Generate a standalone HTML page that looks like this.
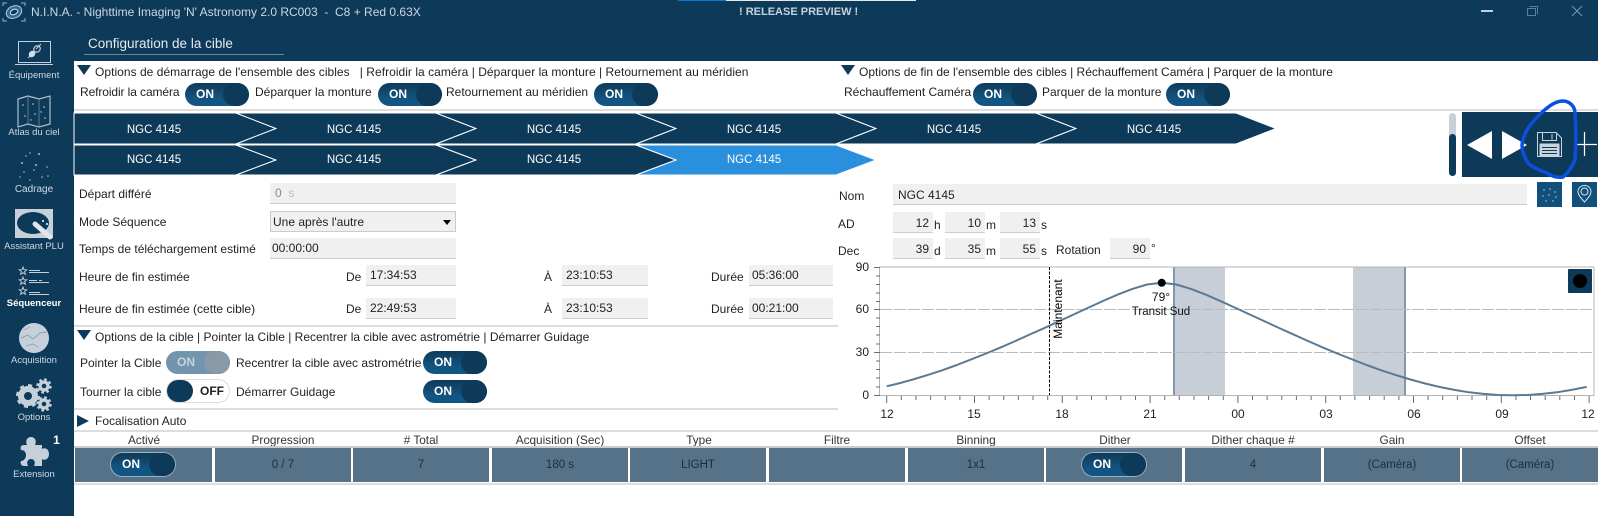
<!DOCTYPE html>
<html><head><meta charset="utf-8"><style>
html,body{margin:0;padding:0;background:#fff}
#p{position:relative;width:1598px;height:516px;overflow:hidden;background:#fff;font-family:"Liberation Sans",sans-serif;font-size:12px;color:#222}
.t{position:absolute;line-height:16px;white-space:nowrap}
.b{position:absolute;background:#f0f0f0;border-bottom:1px solid #ccc}
.h{position:absolute;height:2px;background:#ddd}
.s{position:absolute;color:#cfd8e0;font-size:9.5px;line-height:12px;text-align:center;left:0;width:66px;white-space:nowrap}
.tg{position:absolute;width:64px;height:23px;border-radius:12px;background:linear-gradient(#0e3a59,#135582 70%);color:#fff;font-weight:bold;font-size:12px;line-height:22px}
.tg i{position:absolute;right:0;top:0;width:26px;height:23px;border-radius:12px;background:#0e3a59}
.tg span{position:absolute;left:11px}
.c{position:absolute;top:448px;height:34px;width:136px;background:#557289;color:#1f2d38;text-align:center;line-height:35px;font-size:11.5px}
.th{position:absolute;top:432px;width:138px;text-align:center;line-height:16px;font-size:11.8px;color:#333}
.n{position:absolute;color:#fff;text-align:center;width:100px;line-height:16px;font-size:11.5px}
svg{position:absolute;left:0;top:0}
</style></head><body><div id="p">

<div style="position:absolute;left:0;top:0;width:1598px;height:61px;background:#0e3a59"></div>
<div style="position:absolute;left:0;top:0;width:74px;height:516px;background:#0e3a59"></div>
<div style="position:absolute;left:678px;top:0;width:48px;height:1px;background:#0a78d7"></div>
<div style="position:absolute;left:726px;top:0;width:190px;height:1px;background:#e8e8e8"></div>

<div class="t" style="left:31px;top:4px;font-size:12px;color:#ccd6df">N.I.N.A. - Nighttime Imaging 'N' Astronomy 2.0 RC003 &nbsp;- &nbsp;C8 + Red 0.63X</div>
<div class="t" style="left:739px;top:4px;font-weight:bold;font-size:11px;color:#c5d2dd">! RELEASE PREVIEW !</div>
<div class="t" style="left:88px;top:36px;font-size:13.5px;color:#e4eaef">Configuration de la cible</div>
<div style="position:absolute;left:84px;top:54px;width:200px;height:1px;background:#6c8597"></div>

<!-- sidebar labels -->
<div class="s" style="left:1px;top:70px">Équipement</div>
<div class="s" style="left:1px;top:127px">Atlas du ciel</div>
<div class="s" style="left:1px;top:184px;font-size:10px">Cadrage</div>
<div class="s" style="left:1px;top:241px">Assistant PLU</div>
<div class="s" style="left:1px;top:298px;color:#fff;font-weight:bold">Séquenceur</div>
<div class="s" style="left:1px;top:355px">Acquisition</div>
<div class="s" style="left:1px;top:412px">Options</div>
<div class="s" style="left:1px;top:469px">Extension</div>
<div style="position:absolute;left:49px;top:433px;width:15px;height:15px;color:#fff;font-weight:bold;font-size:12px;text-align:center;line-height:15px">1</div>

<!-- top options -->
<div class="t" style="left:95px;top:64px;letter-spacing:.035px">Options de démarrage de l'ensemble des cibles &nbsp; | Refroidir la caméra | Déparquer la monture | Retournement au méridien</div>
<div class="t" style="left:859px;top:64px">Options de fin de l'ensemble des cibles | Réchauffement Caméra | Parquer de la monture</div>
<div class="t" style="left:80px;top:84px;letter-spacing:-.1px">Refroidir la caméra</div>
<div class="t" style="left:255px;top:84px">Déparquer la monture</div>
<div class="t" style="left:446px;top:84px">Retournement au méridien</div>
<div class="t" style="left:844px;top:84px">Réchauffement Caméra</div>
<div class="t" style="left:1042px;top:84px">Parquer de la monture</div>
<div class="tg" style="left:185px;top:83px"><span>ON</span><i></i></div>
<div class="tg" style="left:378px;top:83px"><span>ON</span><i></i></div>
<div class="tg" style="left:594px;top:83px"><span>ON</span><i></i></div>
<div class="tg" style="left:973px;top:83px"><span>ON</span><i></i></div>
<div class="tg" style="left:1166px;top:83px"><span>ON</span><i></i></div>
<div class="h" style="left:74px;top:109px;width:1524px"></div>

<!-- main SVG -->
<svg width="1598" height="516" viewBox="0 0 1598 516" xmlns="http://www.w3.org/2000/svg">
<!-- window controls -->
<rect x="1481" y="10" width="12" height="2" fill="#c5d0da"/>
<path d="M1527.500 8.500H1535.500V15.500H1527.500Z" fill="none" stroke="#5d7f99" stroke-width="1"/>
<path d="M1529.500 6.500H1537.500V14" fill="none" stroke="#5d7f99" stroke-width="1"/>
<path d="M1572 6L1582 16M1582 6L1572 16" fill="none" stroke="#7d98ad" stroke-width="1"/>
<!-- logo -->
<g fill="none" stroke="#9fb3c3" stroke-width="1"><path d="M3 6V3H7M21 3H25V6M3 18V21H7M21 21H25V18"/></g>
<ellipse cx="14" cy="12" rx="8" ry="6" fill="#2f6b96" stroke="#b8c9d6" transform="rotate(-25 14 12)"/>
<ellipse cx="14" cy="12" rx="4" ry="2.5" fill="#0e3a59" stroke="#d6e0e8" transform="rotate(-25 14 12)"/>
<!-- laptop -->
<g fill="none" stroke="#c5d0da"><rect x="18.500" y="41.500" width="32" height="21"/><path d="M15 64.500H53"/>
<path d="M28 58l4-4M36 49l5-5" stroke-width="1"/><ellipse cx="32" cy="54" rx="3.500" ry="3" transform="rotate(-45 32 54)" fill="#d5dde4" stroke="none"/><ellipse cx="37" cy="49" rx="3.500" ry="3" transform="rotate(-45 37 49)" fill="none" stroke-width="1.200"/></g>
<!-- atlas -->
<path d="M18 99L28 96L39 99L50 96V124L39 127L28 124L18 127Z" fill="none" stroke="#aebdca" stroke-width="1.200"/>
<path d="M28 96V124M39 99V127" stroke="#7e97aa" stroke-width=".7"/>
<g fill="#c5d0da"><circle cx="23" cy="105" r=".8"/><circle cx="33" cy="104" r=".8"/><circle cx="44" cy="107" r=".8"/><circle cx="25" cy="116" r=".8"/><circle cx="35" cy="114" r=".8"/><circle cx="45" cy="118" r=".8"/><circle cx="31" cy="120" r=".7"/><circle cx="41" cy="112" r=".7"/></g>
<!-- cadrage -->
<g fill="#aebdca"><circle cx="30" cy="153" r=".8"/><circle cx="39" cy="154" r="1"/><circle cx="22" cy="163" r="1"/><circle cx="36" cy="165" r="1"/><circle cx="47" cy="167" r=".8"/><circle cx="24" cy="172" r=".8"/><circle cx="42" cy="177" r=".8"/><circle cx="30" cy="180" r=".8"/><circle cx="48" cy="176" r=".8"/><circle cx="34" cy="170" r=".8"/><circle cx="26" cy="156" r=".7"/><circle cx="20" cy="177" r=".7"/></g>
<!-- PLU -->
<rect x="15" y="209" width="38" height="29" fill="#c5d0da"/>
<ellipse cx="33" cy="223" rx="16" ry="11" fill="#0e3a59"/>
<path d="M35 224L50 237" stroke="#dfe6ec" stroke-width="5" stroke-linecap="round"/>
<g fill="#fff"><circle cx="43" cy="221" r="1"/><circle cx="47" cy="224" r="1"/></g>
<!-- sequencer -->
<g fill="none" stroke="#c5d0da" stroke-width=".9">
<path d="M23 267l1 2.700 2.800.1-2.200 1.700.8 2.800-2.400-1.600-2.400 1.600.8-2.800-2.200-1.700 2.800-.1z"/>
<path d="M23 277l1 2.700 2.800.1-2.200 1.700.8 2.800-2.400-1.600-2.400 1.600.8-2.800-2.200-1.700 2.800-.1z"/>
<path d="M23 287l1 2.700 2.800.1-2.200 1.700.8 2.800-2.400-1.600-2.400 1.600.8-2.800-2.200-1.700 2.800-.1z"/>
<path d="M29 270.500H40M29 272.500H49M29 280.500H37M39 280.500H42M29 282.500H49M29 292.500H40M29 294.500H49"/></g>
<!-- acquisition -->
<circle cx="34" cy="338" r="15" fill="#c5d0da"/>
<path d="M21 338L28 335L33 339L40 333L47 332" fill="none" stroke="#7f95a7" stroke-width=".7"/>
<path d="M26 346L33 344L38 347M24 330L30 327" fill="none" stroke="#7f95a7" stroke-width=".6"/>
<!-- gears -->
<g fill="none" stroke="#c5d0da">
<circle cx="28" cy="396" r="7" stroke-width="6"/><circle cx="28" cy="396" r="10.500" stroke-width="3" stroke-dasharray="4 4.200"/>
<circle cx="44" cy="386" r="4" stroke-width="3.400"/><circle cx="44" cy="386" r="6.500" stroke-width="2.400" stroke-dasharray="2.600 2.500"/>
<circle cx="44" cy="404" r="4" stroke-width="3.400"/><circle cx="44" cy="404" r="6.500" stroke-width="2.400" stroke-dasharray="2.600 2.500"/></g>
<!-- puzzle -->
<path d="M24 445H27C25 441 27 437 31 437C35 437 37 441 35 445H42V449C45 447 49 449 49 454C49 459 45 461 42 459V466H34C36 462 34 459 31 459C28 459 26 462 28 466H24C21 466 20 463 21 461C24 461 26 458 26 455C26 452 24 450 21 450C20 447 21 445 24 445Z" fill="#c5d0da"/>

<!-- triangles -->
<path d="M77 65H91L84 75Z M841 65H855L848 75Z M77 330H91L84 340Z" fill="#0e3a59"/>
<path d="M77 415L89 421L77 427Z" fill="#0e3a59"/>

<!-- chevrons -->
<g fill="#0e3a59" stroke="#fff" stroke-width="1">
<path d="M74 113H236L276 128.500L236 144H74Z"/>
<path d="M236 113H436L476 128.500L436 144H236L276 128.500Z"/>
<path d="M436 113H636L676 128.500L636 144H436L476 128.500Z"/>
<path d="M636 113H836L876 128.500L836 144H636L676 128.500Z"/>
<path d="M836 113H1036L1076 128.500L1036 144H836L876 128.500Z"/>
<path d="M1036 113H1236L1276 128.500L1236 144H1036L1076 128.500Z"/>
<path d="M74 145H236L276 160L236 175H74Z"/>
<path d="M236 145H436L476 160L436 175H236L276 160Z"/>
<path d="M436 145H636L676 160L636 175H436L476 160Z"/>
<path d="M636 145H836L876 160L836 175H636L676 160Z" fill="#2a8fdc"/>
</g>

<!-- scrollbar and buttons -->
<rect x="1449" y="113" width="7" height="63" rx="3.500" fill="#c5d0da"/>
<rect x="1449" y="134" width="7" height="42" rx="3.500" fill="#0e3a59"/>
<rect x="1462" y="112" width="136" height="65" fill="#0e3a59"/>
<path d="M1467 145L1492 131V159Z M1502 131V159L1527 145Z" fill="#fff"/>
<g fill="none" stroke="#c9d4dd" stroke-width="1"><path d="M1537.500 132.500H1556L1561.500 138V156.500H1537.500Z"/><path d="M1542.500 132.500V140.500H1556.500V133M1552 134V139.500"/></g>
<rect x="1539.500" y="143.500" width="20" height="13" fill="#c9d4dd"/>
<path d="M1542 147.500H1557M1542 150.500H1557M1542 153.500H1557" stroke="#0e3a59" fill="none"/>
<path d="M1576 144.500H1597M1584.500 132V156" stroke="#fff" stroke-width="1.200" fill="none"/>
<path d="M1547 108C1552 104 1557 101 1563 101C1569 101 1575 106 1575 113C1576 128 1576 145 1575 160C1572 167 1568 173 1563 177C1556 178 1552 176 1547 173C1539 170 1533 168 1528 163C1524 157 1522 151 1522 145C1523 136 1527 129 1532 123C1537 117 1542 112 1547 108Z" fill="none" stroke="#0a4fe0" stroke-width="3.500"/>
<rect x="1537" y="182" width="25" height="25" fill="#11507a"/>
<rect x="1572" y="182" width="25" height="25" fill="#11507a"/>
<g fill="#8fa9bd"><circle cx="1544" cy="190" r=".9"/><circle cx="1550" cy="189" r=".9"/><circle cx="1555" cy="192" r=".9"/><circle cx="1543" cy="196" r=".9"/><circle cx="1549" cy="195" r=".9"/><circle cx="1556" cy="197" r=".9"/><circle cx="1546" cy="201" r=".9"/><circle cx="1553" cy="201" r=".9"/></g>
<path d="M1584.500 202C1581 198 1578 195 1578 191.500C1578 188 1581 185.500 1584.500 185.500C1588 185.500 1591 188 1591 191.500C1591 195 1588 198 1584.500 202Z" fill="none" stroke="#dbe4ea"/>
<circle cx="1584.500" cy="191.500" r="3.500" fill="none" stroke="#dbe4ea"/>

<!-- chart -->
<rect x="1173" y="267" width="52" height="128" fill="#c7ced7"/>
<rect x="1353" y="267" width="51" height="128" fill="#c7ced7"/>
<rect x="1173" y="267" width="2" height="128" fill="#8496a8"/>
<rect x="1404" y="267" width="2" height="128" fill="#8496a8"/>
<path d="M880 309.500H1594M880 352.500H1594" stroke="#bbb" stroke-dasharray="12 2" fill="none"/>
<path d="M879.500 267V395.500H1594V267M879.500 267H1594" stroke="#b4b4b4" fill="none"/>
<path d="M874 267.500H880M874 309.500H880M874 352.500H880M874 395.500H880" stroke="#5a7288"/>
<path d="M876 276H880M876 284.500H880M876 293H880M876 301.500H880M876 318H880M876 326.500H880M876 335H880M876 344H880M876 361H880M876 369.500H880M876 378H880M876 387H880" stroke="#5a7288"/>
<path d="M886.700 396V403M974.500 396V403M1062.300 396V403M1150.100 396V403M1237.900 396V403M1325.700 396V403M1413.500 396V403M1501.300 396V403M1589.100 396V403" stroke="#5a7288"/>
<path d="M901.300 396V400M915.900 396V400M930.600 396V400M945.200 396V400M959.900 396V400M989.100 396V400M1003.700 396V400M1018.400 396V400M1033 396V400M1047.700 396V400M1076.900 396V400M1091.500 396V400M1106.200 396V400M1120.800 396V400M1135.500 396V400M1164.700 396V400M1179.300 396V400M1194 396V400M1208.600 396V400M1223.300 396V400M1252.500 396V400M1267.100 396V400M1281.800 396V400M1296.400 396V400M1311.100 396V400M1340.300 396V400M1354.900 396V400M1369.600 396V400M1384.200 396V400M1398.900 396V400M1428.100 396V400M1442.700 396V400M1457.400 396V400M1472 396V400M1486.700 396V400M1515.900 396V400M1530.500 396V400M1545.200 396V400M1559.800 396V400M1574.500 396V400" stroke="#5a7288"/>
<path d="M1049.500 267V395" stroke="#000" stroke-dasharray="3 1.500" fill="none"/>
<polyline points="886.700,386.300 898.300,383.500 912.900,379.500 927.500,375.100 942.200,370.300 956.800,365 971.400,359.300 986.100,353.500 1000.700,347.400 1015.400,341 1030,334.400 1044.600,327.900 1059.200,321.100 1073.900,314.400 1088.500,307.600 1103.200,300.900 1117.800,294.600 1132.400,288.900 1147.100,284.500 1161.700,282.800 1176.300,284.500 1191,288.900 1205.600,294.600 1220.200,300.900 1234.900,307.600 1249.500,314.400 1264.200,321.100 1278.800,327.900 1293.400,334.400 1308,341 1322.700,347.400 1337.300,353.500 1352,359.300 1366.600,365 1381.200,370.300 1395.900,375.100 1410.500,379.500 1425.100,383.500 1439.800,387 1454.400,389.900 1469,392.300 1483.700,393.900 1498.300,395 1513,395.300 1527.700,395 1542.200,393.900 1556.800,392.300 1571.500,389.900 1586.700,386.900" fill="none" stroke="#5a7a94" stroke-width="2" stroke-linejoin="round"/>
<circle cx="1161.700" cy="282.800" r="4" fill="#000"/>
<rect x="1568" y="269" width="24" height="24" rx="1" fill="#0e3a59"/>
<circle cx="1580" cy="281" r="7" fill="#000"/>
<text x="1058" y="309" transform="rotate(-90 1058 309)" text-anchor="middle" dominant-baseline="central" font-family="Liberation Sans" font-size="12" fill="#000">Maintenant</text>
</svg>

<!-- chart labels -->
<div class="t" style="left:1141px;top:289px;width:40px;text-align:center;color:#111">79°</div>
<div class="t" style="left:1121px;top:304px;width:80px;text-align:center;color:#111;font-size:11.5px">Transit Sud</div>
<div class="t" style="left:854px;top:259px;width:15px;text-align:right;color:#222">90</div>
<div class="t" style="left:854px;top:301px;width:15px;text-align:right;color:#222">60</div>
<div class="t" style="left:854px;top:344px;width:15px;text-align:right;color:#222">30</div>
<div class="t" style="left:854px;top:387px;width:15px;text-align:right;color:#222">0</div>
<div class="t" style="left:877px;top:406px;width:20px;text-align:center">12</div>
<div class="t" style="left:964px;top:406px;width:20px;text-align:center">15</div>
<div class="t" style="left:1052px;top:406px;width:20px;text-align:center">18</div>
<div class="t" style="left:1140px;top:406px;width:20px;text-align:center">21</div>
<div class="t" style="left:1228px;top:406px;width:20px;text-align:center">00</div>
<div class="t" style="left:1316px;top:406px;width:20px;text-align:center">03</div>
<div class="t" style="left:1404px;top:406px;width:20px;text-align:center">06</div>
<div class="t" style="left:1492px;top:406px;width:20px;text-align:center">09</div>
<div class="t" style="left:1578px;top:406px;width:20px;text-align:center">12</div>

<!-- chevron text -->
<div class="n" style="left:104px;top:122px">NGC 4145</div>
<div class="n" style="left:304px;top:122px">NGC 4145</div>
<div class="n" style="left:504px;top:122px">NGC 4145</div>
<div class="n" style="left:704px;top:122px">NGC 4145</div>
<div class="n" style="left:904px;top:122px">NGC 4145</div>
<div class="n" style="left:1104px;top:122px">NGC 4145</div>
<div class="n" style="left:104px;top:152px">NGC 4145</div>
<div class="n" style="left:304px;top:152px">NGC 4145</div>
<div class="n" style="left:504px;top:152px">NGC 4145</div>
<div class="n" style="left:704px;top:152px">NGC 4145</div>

<!-- left form -->
<div class="t" style="left:79px;top:186px">Départ différé</div>
<div class="t" style="left:79px;top:214px">Mode Séquence</div>
<div class="t" style="left:79px;top:241px">Temps de téléchargement estimé</div>
<div class="t" style="left:79px;top:269px">Heure de fin estimée</div>
<div class="t" style="left:79px;top:301px">Heure de fin estimée (cette cible)</div>
<div class="b" style="left:270px;top:183px;width:186px;height:20px"><span class="t" style="left:5px;top:2px;color:#888">0 &nbsp;<span style="color:#bbb">s</span></span></div>
<div class="b" style="left:270px;top:211px;width:184px;height:19px;border:1px solid #ccc"><span class="t" style="left:2px;top:2px">Une après l'autre</span><span style="position:absolute;right:4px;top:8px;border-left:4px solid transparent;border-right:4px solid transparent;border-top:5px solid #000"></span></div>
<div class="b" style="left:270px;top:238px;width:186px;height:20px"><span class="t" style="left:2px;top:2px">00:00:00</span></div>
<div class="t" style="left:346px;top:269px">De</div>
<div class="t" style="left:346px;top:301px">De</div>
<div class="b" style="left:366px;top:265px;width:90px;height:20px"><span class="t" style="left:4px;top:2px">17:34:53</span></div>
<div class="b" style="left:366px;top:298px;width:90px;height:20px"><span class="t" style="left:4px;top:2px">22:49:53</span></div>
<div class="t" style="left:544px;top:269px">À</div>
<div class="t" style="left:544px;top:301px">À</div>
<div class="b" style="left:562px;top:265px;width:86px;height:20px"><span class="t" style="left:4px;top:2px">23:10:53</span></div>
<div class="b" style="left:562px;top:298px;width:86px;height:20px"><span class="t" style="left:4px;top:2px">23:10:53</span></div>
<div class="t" style="left:711px;top:269px">Durée</div>
<div class="t" style="left:711px;top:301px">Durée</div>
<div class="b" style="left:749px;top:265px;width:84px;height:20px"><span class="t" style="left:3px;top:2px">05:36:00</span></div>
<div class="b" style="left:749px;top:298px;width:84px;height:20px"><span class="t" style="left:3px;top:2px">00:21:00</span></div>
<div class="h" style="left:74px;top:325px;width:764px"></div>

<!-- right form -->
<div class="t" style="left:839px;top:188px">Nom</div>
<div class="t" style="left:838px;top:216px">AD</div>
<div class="t" style="left:838px;top:243px">Dec</div>
<div class="b" style="left:893px;top:184px;width:634px;height:20px"><span class="t" style="left:5px;top:3px">NGC 4145</span></div>
<div class="b" style="left:893px;top:212px;width:40px;height:20px"><span class="t" style="right:4px;top:3px">12</span></div>
<div class="t" style="left:934px;top:217px">h</div>
<div class="b" style="left:945px;top:212px;width:40px;height:20px"><span class="t" style="right:4px;top:3px">10</span></div>
<div class="t" style="left:986px;top:217px">m</div>
<div class="b" style="left:1000px;top:212px;width:40px;height:20px"><span class="t" style="right:4px;top:3px">13</span></div>
<div class="t" style="left:1041px;top:217px">s</div>
<div class="b" style="left:893px;top:238px;width:40px;height:20px"><span class="t" style="right:4px;top:3px">39</span></div>
<div class="t" style="left:934px;top:243px">d</div>
<div class="b" style="left:945px;top:238px;width:40px;height:20px"><span class="t" style="right:4px;top:3px">35</span></div>
<div class="t" style="left:986px;top:243px">m</div>
<div class="b" style="left:1000px;top:238px;width:40px;height:20px"><span class="t" style="right:4px;top:3px">55</span></div>
<div class="t" style="left:1041px;top:243px">s</div>
<div class="t" style="left:1056px;top:242px">Rotation</div>
<div class="b" style="left:1110px;top:238px;width:40px;height:20px"><span class="t" style="right:4px;top:3px">90</span></div>
<div class="t" style="left:1151px;top:240px">°</div>

<!-- target options -->
<div class="t" style="left:95px;top:329px">Options de la cible | Pointer la Cible | Recentrer la cible avec astrométrie | Démarrer Guidage</div>
<div class="t" style="left:80px;top:355px">Pointer la Cible</div>
<div class="t" style="left:236px;top:355px">Recentrer la cible avec astrométrie</div>
<div class="t" style="left:80px;top:384px">Tourner la cible</div>
<div class="t" style="left:236px;top:384px">Démarrer Guidage</div>
<div class="tg" style="left:166px;top:351px;background:#7394ad;color:#c5d3de;border-radius:12px"><span>ON</span><i style="background:#8899a8"></i></div>
<div class="tg" style="left:423px;top:351px"><span>ON</span><i></i></div>
<div class="tg" style="left:423px;top:380px"><span>ON</span><i></i></div>
<div class="tg" style="left:166px;top:379px;height:22px;width:62px;border:1px solid #ddd;background:#fff;color:#222"><i style="left:0;right:auto;top:0;height:22px;width:26px"></i><span style="left:33px">OFF</span></div>
<div class="h" style="left:74px;top:408px;width:764px"></div>
<div class="t" style="left:95px;top:413px">Focalisation Auto</div>
<div class="h" style="left:74px;top:430px;width:1524px"></div>

<!-- table -->
<div class="th" style="left:75px">Activé</div>
<div class="th" style="left:214px">Progression</div>
<div class="th" style="left:352px"># Total</div>
<div class="th" style="left:491px">Acquisition (Sec)</div>
<div class="th" style="left:630px">Type</div>
<div class="th" style="left:768px">Filtre</div>
<div class="th" style="left:907px">Binning</div>
<div class="th" style="left:1046px">Dither</div>
<div class="th" style="left:1184px">Dither chaque #</div>
<div class="th" style="left:1323px">Gain</div>
<div class="th" style="left:1461px">Offset</div>
<div class="h" style="left:74px;top:446px;width:1524px;background:#ccc"></div>
<div class="c" style="left:75px;width:137px"></div>
<div class="c" style="left:215px">0 / 7</div>
<div class="c" style="left:353px">7</div>
<div class="c" style="left:492px">180 s</div>
<div class="c" style="left:630px">LIGHT</div>
<div class="c" style="left:769px"></div>
<div class="c" style="left:908px">1x1</div>
<div class="c" style="left:1046px"></div>
<div class="c" style="left:1185px">4</div>
<div class="c" style="left:1324px">(Caméra)</div>
<div class="c" style="left:1462px">(Caméra)</div>
<div class="tg" style="left:111px;top:453px;box-shadow:0 0 0 1px #9fb0bd"><span>ON</span><i></i></div>
<div class="tg" style="left:1082px;top:453px;box-shadow:0 0 0 1px #9fb0bd"><span>ON</span><i></i></div>
<div class="h" style="left:74px;top:483px;width:1524px"></div>
</div></body></html>
